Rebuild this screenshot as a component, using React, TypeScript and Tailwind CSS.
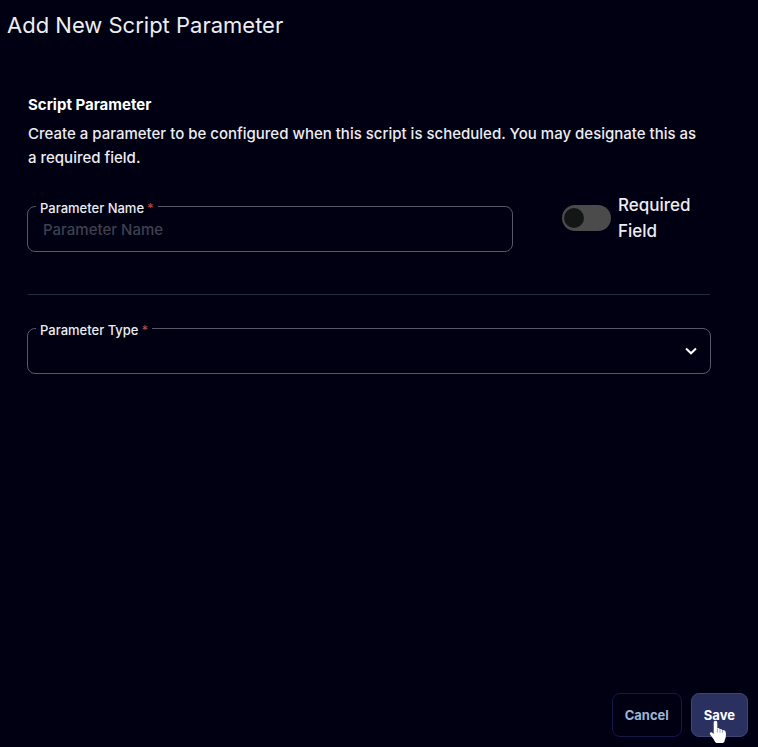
import { useState } from "react";
import type { ReactNode } from "react";

function FloatingLabel({ htmlFor, children }: { htmlFor: string; children: ReactNode }) {
  return (
    <label
      htmlFor={htmlFor}
      className="absolute -top-2 left-2 bg-[#000013] px-1 text-[13px] leading-[18px] font-medium text-[#ededef]"
    >
      {children}
      <span className="pl-[3px] text-[#b5483f]">*</span>
    </label>
  );
}

function PointerCursor() {
  return (
    <svg
      aria-hidden="true"
      viewBox="0 0 18 24"
      className="pointer-events-none absolute top-[26px] left-[17px] h-6 w-[18px]"
    >
      <path
        d="M6.500 .8c1.100 0 1.800.8 1.800 1.800v5.600c1-.3 2 .1 2.500.9 1-.4 2 0 2.500.9 1.500-.3 3 .4 3.300 1.800.5 1.500.5 4 0 6-.3 1.100-.9 1.900-1 3.200-.4 1.500-1.300 2-2.400 2H8.300c-1.300 0-2-.6-2.600-1.800C4.900 19 2.400 16.800 1 14.300c-.7-1.300.7-2.500 2-1.700l1.700 1.300V2.600c0-1 .7-1.800 1.800-1.800Z"
        fill="white"
      />
      <path d="M8.400 8.500v4M11 9.300v3.400M13.500 10.200v2.600" stroke="#5d6386" strokeWidth="0.6" />
    </svg>
  );
}

export default function App() {
  const [required, setRequired] = useState(false);
  const [name, setName] = useState("");

  return (
    <form
      onSubmit={(e) => e.preventDefault()}
      className="flex min-h-screen flex-col bg-[#000013] font-['Inter',sans-serif] text-[#ededf2]"
    >
      <header className="px-[7px] pt-[9px]">
        <h1 className="text-[22px] leading-8 font-normal">Add New Script Parameter</h1>
      </header>

      <main className="flex-1 pt-[52px] pr-[47px] pl-[27px]">
        <h2 className="pl-px text-[15px] leading-6 font-bold text-white">Script Parameter</h2>
        <p className="mt-[5px] pr-2 pl-px text-[15px] leading-6 font-medium">
          Create a parameter to be configured when this script is scheduled. You may designate this as a
          required field.
        </p>

        <div className="mx-px mt-[22px] flex items-start gap-[49px] border-b border-[#2a2b3b] pb-[42px]">
          <div className="relative mt-3.5 -ml-px h-[46px] flex-1 rounded-lg border border-[#565869]">
            <input
              id="parameter-name"
              required
              value={name}
              onChange={(e) => setName(e.target.value)}
              placeholder="Parameter Name"
              className="h-full w-full rounded-lg bg-transparent px-[15px] text-[15px] font-medium outline-none placeholder:text-[#3e404e]"
            />
            <FloatingLabel htmlFor="parameter-name">Parameter Name</FloatingLabel>
          </div>
          <label className="flex w-[148px] items-center gap-[7px] text-[17px] leading-[26px] font-medium">
            <input
              type="checkbox"
              role="switch"
              checked={required}
              onChange={(e) => setRequired(e.target.checked)}
              className="flex h-[26px] w-[49px] shrink-0 appearance-none items-center rounded-full bg-[#4b4b4b] px-0.5 before:size-5 before:rounded-full before:bg-[#131614] checked:justify-end"
            />
            <span>Required Field</span>
          </label>
        </div>

        <div className="relative mt-[33px] h-[46px] rounded-lg border border-[#565869]">
          <select
            id="parameter-type"
            required
            defaultValue=""
            className="h-full w-full appearance-none rounded-lg bg-transparent px-[15px] text-[15px] outline-none"
          >
            <option value="" />
          </select>
          <svg
            aria-hidden="true"
            viewBox="0 0 12 8"
            className="pointer-events-none absolute top-[18px] right-[13px] h-2 w-3"
          >
            <path d="M1 1.500 6 6.300l5-4.800" fill="none" stroke="white" strokeWidth="2" />
          </svg>
          <FloatingLabel htmlFor="parameter-type">Parameter Type</FloatingLabel>
        </div>
      </main>

      <footer className="flex justify-end gap-[9px] pr-2.5 pb-2.5 text-[13px] font-bold">
        <button type="button" className="h-11 rounded-lg border border-[#15184a] px-3 pt-0.5 text-[#9db4d6]">
          Cancel
        </button>
        <button
          type="submit"
          className="relative h-11 rounded-lg border border-[#3d4673] bg-[#2a3160] px-3 pt-0.5 text-white"
        >
          Save
          <PointerCursor />
        </button>
      </footer>
    </form>
  );
}
